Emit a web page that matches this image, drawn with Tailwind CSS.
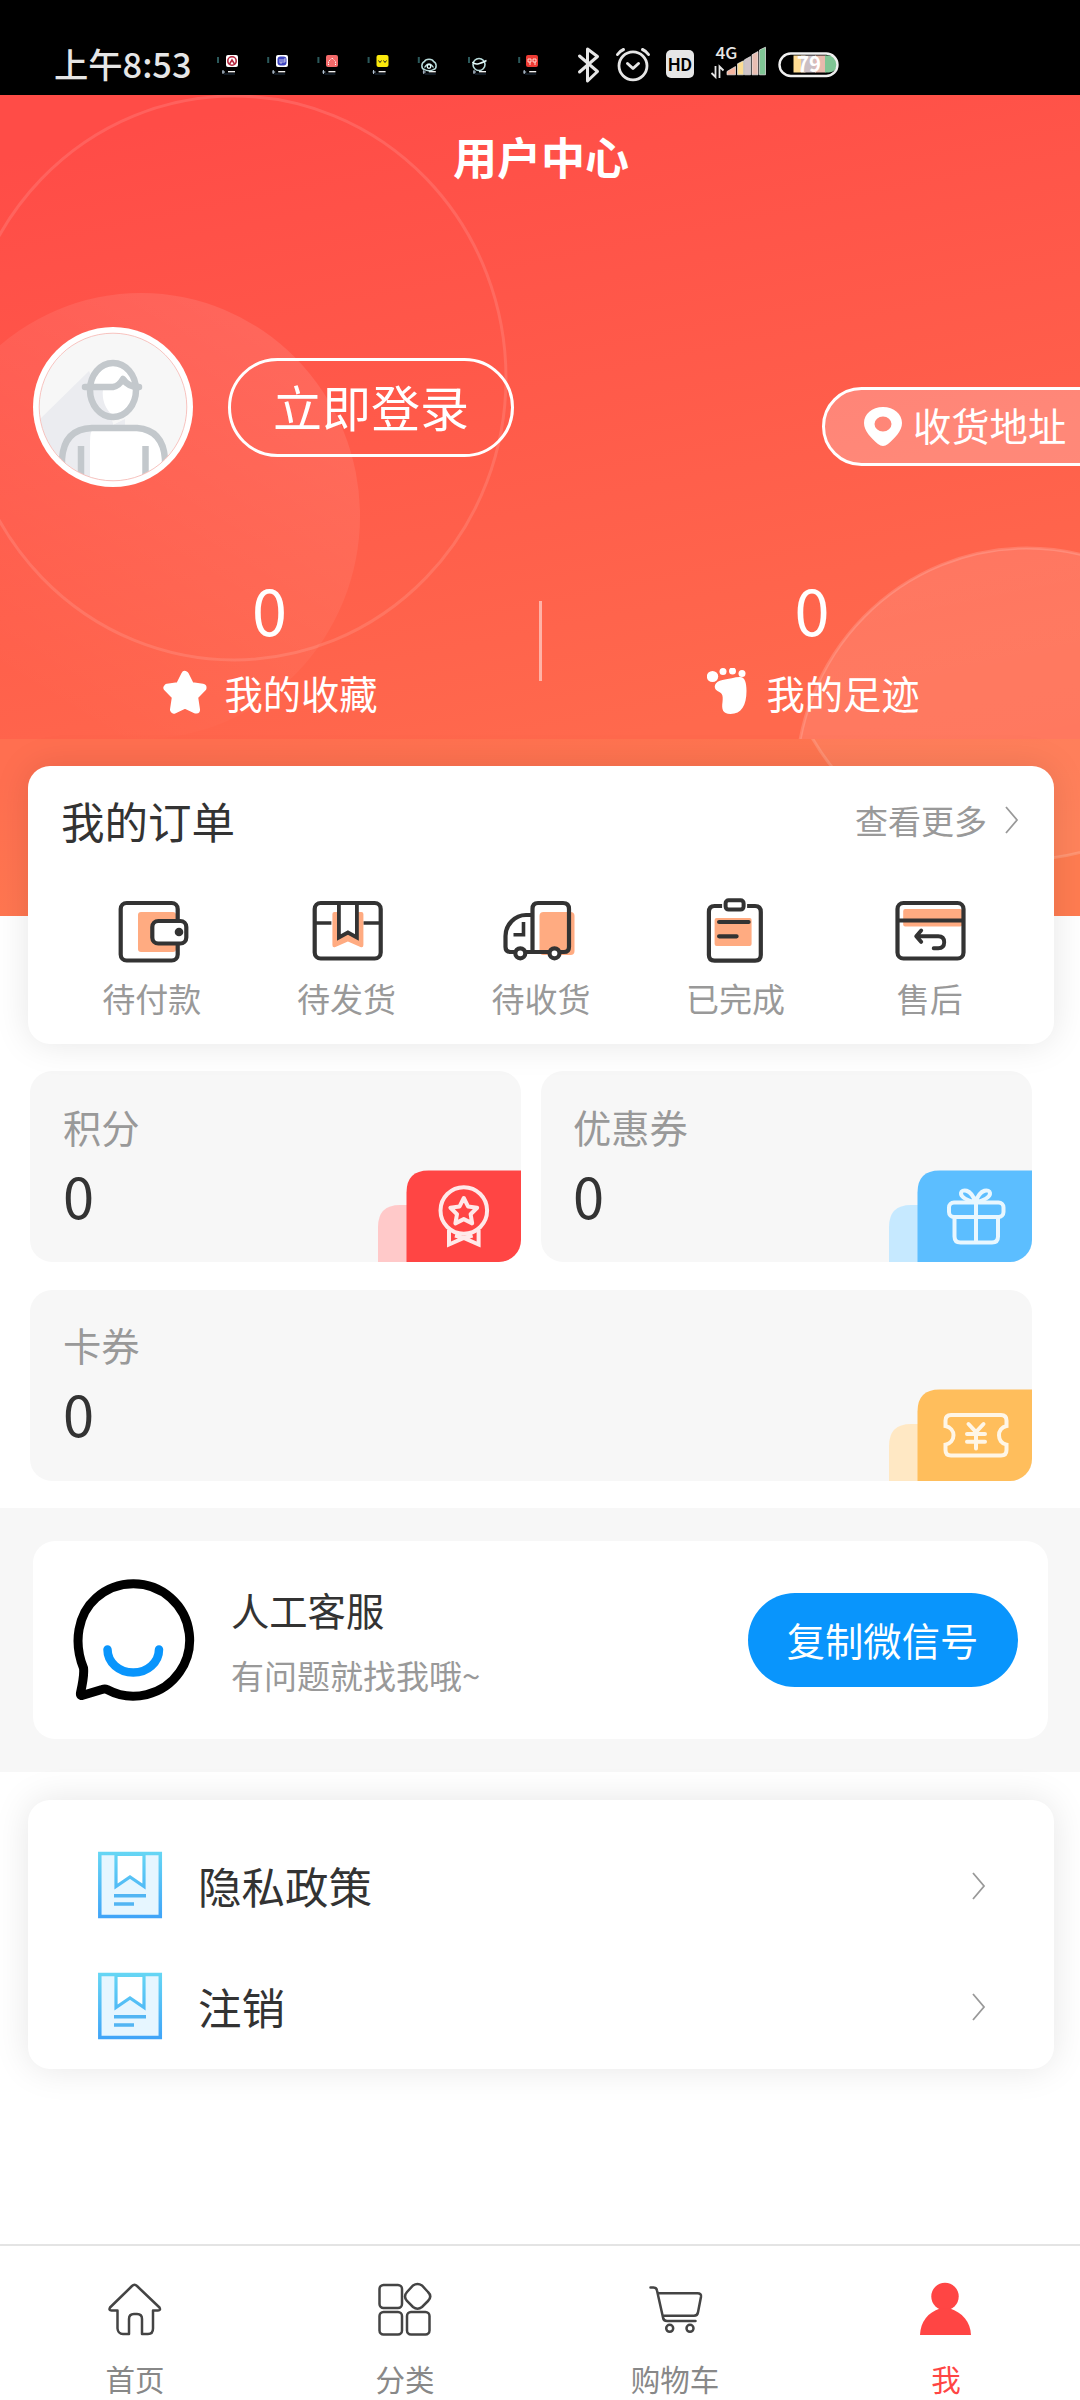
<!DOCTYPE html>
<html lang="zh-CN">
<head>
<meta charset="utf-8">
<title>用户中心</title>
<script src="https://cdn.jsdelivr.net/npm/@tailwindcss/browser@4"></script>
</head>
<body class="bg-white">
<div class="relative w-[1080px] h-[2400px] overflow-hidden flex flex-col bg-white text-[#333] leading-none font-['Noto_Sans_CJK_SC',sans-serif]">

  <!-- status bar -->
  <div class="h-[95px] shrink-0 bg-black flex">
    <div class="w-[217px] pl-[54px] pt-[46px] text-[34.3px] font-medium text-[#e6e6e6] whitespace-nowrap">上午8:53</div>
    <svg class="shrink-0" width="863" height="95" viewBox="217 0 863 95" fill="none">
      <defs>
        <g id="note"><rect x="217" y="57" width="2" height="6" fill="#2b5a5c"/><path d="M223 70v4M222 72h3" stroke="#bcd" stroke-width="1"/><path d="M228 71.7h7" stroke="#fff" stroke-width="1.3"/><path d="M224 74h11" stroke="#234" stroke-width="1"/></g>
      </defs>
      <use href="#note"/><use href="#note" x="50.2"/><use href="#note" x="100.4"/><use href="#note" x="150.6"/><use href="#note" x="200.8"/><use href="#note" x="251"/><use href="#note" x="301.2"/>
      <rect x="226" y="55" width="12" height="12" rx="2" fill="#fff"/><circle cx="232" cy="61" r="4.2" stroke="#b3243c" stroke-width="1.6"/><path d="M229.500 64l2.500-4 2.500 4" stroke="#b3243c" stroke-width="1.500"/>
      <rect x="276" y="55" width="12" height="12" rx="2" fill="#fff"/><rect x="277.500" y="56.500" width="9" height="9" rx="3" fill="#3d44c0"/><path d="M280 59v4h2v-4M284 63v-4h2M284 61h2" stroke="#dde" stroke-width=".8"/>
      <rect x="326" y="55" width="12" height="12" rx="2" fill="#f46a6a"/><path d="M328.500 65v-4M335.500 65v-4M329 61l3-3 3 3" stroke="#fff" stroke-width="1" stroke-dasharray="1.200 1"/>
      <rect x="376.500" y="55" width="12" height="12" rx="2" fill="#fbe90c"/><path d="M378.500 60.500l1.500 2 1.500-2M383.500 60.500l1.500 2 1.500-2" stroke="#222" stroke-width="1"/>
      <path d="M424.500 69.500c-4-1-3-7 0-8 1-3 8-3 9 0 3 1 4 7 0 8-2 1.500-7 1.500-9 0z" stroke="#b9dcdc" stroke-width="1.500"/><path d="M424.500 67.500q4.500-7 9 0" stroke="#b9dcdc" stroke-width="1.300"/><circle cx="429" cy="66.500" r="1.800" stroke="#e8ffff" stroke-width="1.300"/>
      <circle cx="479" cy="64.500" r="6" stroke="#b9dcdc" stroke-width="1.600"/><path d="M472.500 62c3 4 9 1 14-1.500" stroke="#e8ffff" stroke-width="1.500"/>
      <rect x="526" y="55" width="12" height="12" rx="2" fill="#ee3b34"/><path d="M528 59h3v3h-3zM533 59h3v3h-3zM530 62v3M535 62v3" stroke="#ffd9d0" stroke-width="1"/>
      <g stroke="#e6e6e6" stroke-width="3" stroke-linecap="round" stroke-linejoin="round">
        <path d="M579.500 56l18 15.500-10 9.500V49l10 7.500-18 15.500"/>
        <circle cx="633" cy="65.800" r="14" stroke-width="2.800"/><path d="M627.500 63.500l5.500 5 5.500-5M617.500 54.500q2.500-3.500 6-5M648.500 54.500q-2.500-3.500-6-5"/>
      </g>
      <rect x="666" y="50" width="28" height="28" rx="5" fill="#e6e6e6"/>
      <text x="680" y="71" text-anchor="middle" font-family="Roboto" font-weight="600" font-size="18" textLength="24" lengthAdjust="spacingAndGlyphs" fill="#000">HD</text>
      <text x="715.500" y="59" font-family="Noto Sans CJK SC" font-weight="500" font-size="16" textLength="22" lengthAdjust="spacingAndGlyphs" fill="#e6e6e6">4G</text>
      <path d="M715.500 66v11l-4-4M719.500 78V66.500l4 4" stroke="#e6e6e6" stroke-width="1.800"/>
      <g stroke="#eee" stroke-width=".7"><path d="M727 74.800v-3.300l8.500-5v8.300z" fill="#f4b5a0"/><path d="M737.500 74.800v-11l6-3v14z" fill="#fbdc93"/><path d="M744.500 74.800v-15l6-3.300v18.300z" fill="#cfc3c6"/><path d="M752 74.800v-20l6-3.300v23.300z" fill="#e8beb2"/><path d="M759.500 74.800V50l6-2.800v27.600z" fill="#7fc594"/></g>
      <path d="M793.500 55.500h12v17h-12z" fill="#ffdc92"/><path d="M801 55.500h15v17h-15z" fill="#cbbfc4"/><path d="M815 55.500h10.500v17H815z" fill="#e8b9ad"/><path d="M825 55.500h4a8.500 8.500 0 010 17h-4z" fill="#7fc594"/>
      <rect x="779.500" y="53.500" width="58" height="22.500" rx="11.250" stroke="#f0f0f0" stroke-width="2.400"/>
      <text x="797" y="72" font-family="Noto Sans CJK SC" font-weight="700" font-size="21.500" textLength="24" lengthAdjust="spacingAndGlyphs" fill="#fff">79</text>
    </svg>
  </div>

  <!-- header -->
  <div class="relative h-[821px] shrink-0 overflow-hidden text-white flex flex-col">
    <svg class="absolute left-0 top-0" width="1080" height="821" viewBox="0 95 1080 821" fill="none">
      <defs>
        <linearGradient id="hd" gradientUnits="userSpaceOnUse" x1="470" y1="60" x2="610" y2="740"><stop offset="0" stop-color="#ff4c47"/><stop offset="1" stop-color="#ff694d"/></linearGradient>
        <linearGradient id="hd2" gradientUnits="userSpaceOnUse" x1="470" y1="700" x2="510" y2="930"><stop offset="0" stop-color="#ff6f50"/><stop offset="1" stop-color="#ff7c51"/></linearGradient>
        <linearGradient id="c1" x1=".8" y1="0" x2=".25" y2=".9"><stop offset="0" stop-color="#fff" stop-opacity=".11"/><stop offset="1" stop-color="#fff" stop-opacity="0"/></linearGradient>
        <linearGradient id="c2" x1=".3" y1="0" x2=".5" y2="1"><stop offset="0" stop-color="#fff" stop-opacity=".12"/><stop offset="1" stop-color="#fff" stop-opacity=".08"/></linearGradient>
        <clipPath id="up"><rect y="95" width="1080" height="644"/></clipPath>
        <clipPath id="dn"><rect y="739" width="1080" height="177"/></clipPath>
      </defs>
      <rect y="95" width="1080" height="644" fill="url(#hd)"/>
      <rect y="739" width="1080" height="177" fill="url(#hd2)"/>
      <g clip-path="url(#up)">
        <ellipse cx="141" cy="516" rx="219" ry="223" fill="url(#c1)"/>
        <ellipse cx="234" cy="378" rx="272" ry="282" stroke="#fff" stroke-opacity=".12" stroke-width="3"/>
        <ellipse cx="1027" cy="784" rx="231" ry="236" fill="url(#c2)" stroke="#fff" stroke-opacity=".16" stroke-width="3"/>
      </g>
      <g clip-path="url(#dn)"><ellipse cx="1021" cy="610" rx="243" ry="250" fill="#fff" fill-opacity=".06" stroke="#fff" stroke-opacity=".16" stroke-width="3"/></g>
    </svg>

    <h1 class="relative h-[121px] shrink-0 flex items-center justify-center pl-[2px] text-[44px] font-bold">用户中心</h1>

    <div class="relative mt-[111px] h-[160px] shrink-0 flex items-center pl-[33px]">
      <svg class="shrink-0" width="160" height="160" viewBox="0 0 160 160" fill="none">
        <defs><clipPath id="av"><circle cx="80" cy="80" r="73.500"/></clipPath></defs>
        <circle cx="80" cy="80" r="80" fill="#fff"/>
        <g clip-path="url(#av)">
          <rect width="160" height="160" fill="#f7f7f7"/>
          <path d="M56 44L5 94v66h75V96z" fill="#ebecf0"/>
          <path d="M80 98l12-6v8H80z" fill="#ebecf0"/>
          <ellipse cx="80" cy="63" rx="23" ry="27" fill="#fff"/><path d="M58 62h12q-2 16 10 27-20-4-22-27z" fill="#ebecf0"/>
          <path d="M29 160v-28q2-30 30-31h45q26 2 28 31v28z" fill="#fff"/><path d="M29 160v-28q2-30 30-31h1q-3 4-3 14v45z" fill="#ebecf0"/>
          <g stroke="#c3c8cc" stroke-width="6.500">
            <ellipse cx="80" cy="63" rx="23" ry="27"/>
            <path d="M52 60h28q6-1 10-8 5 8 16 8" stroke-linecap="round" stroke-linejoin="round"/>
            <path d="M29 160v-28q2-30 30-31h45q26 2 28 31v28M48 119v41M112.500 119v41"/>
          </g>
        </g>
        <circle cx="80" cy="80" r="73.800" stroke="#f3a9a3" stroke-width=".7"/>
      </svg>
      <button class="ml-[35px] w-[286px] h-[99px] rounded-full border-3 border-white flex items-center justify-center pb-[4px] text-[49px]">立即登录</button>
      <div class="absolute left-[822px] top-[60px] w-[300px] h-[79px] rounded-full border-3 border-white bg-white/25 flex items-center pl-[39px]">
        <svg width="38" height="39" viewBox="0 0 38 39"><path fill="#fff" fill-rule="evenodd" d="M19 0C30 0 38 7 38 16c0 8-7 15-14 21q-5 4-10 0C7 31 0 24 0 16 0 7 8 0 19 0zm0 9.500a8.500 7.500 0 100 15 8.500 7.500 0 000-15z"/></svg>
        <span class="ml-[11px] -mt-[2px] text-[38.300px] whitespace-nowrap">收货地址</span>
      </div>
    </div>

    <div class="relative h-[252px] shrink-0 flex">
      <div class="w-[539px] flex flex-col items-center">
        <div class="mt-[90px] h-[64px] text-[63px]">0</div>
        <div class="mt-[32px] h-[40px] flex items-center pl-[1px]">
          <svg width="46" height="46" viewBox="0 0 46 46"><path fill="#fff" stroke="#fff" stroke-width="8" stroke-linejoin="round" d="M23 5l5.500 11 12 1.800-8.500 8.600 2 13.200-11-5.300-11 5.300 2-13.200-8.500-8.600 12-1.800z"/></svg>
          <span class="ml-[16px] mt-[1px] text-[38.300px]">我的收藏</span>
        </div>
      </div>
      <div class="mt-[114px] w-[3px] h-[80px] bg-white/50"></div>
      <div class="w-[538px] flex flex-col items-center pl-[2px]">
        <div class="mt-[90px] h-[64px] text-[63px]">0</div>
        <div class="mt-[32px] h-[40px] flex items-center pl-[3px]">
          <svg class="-mt-[4px]" width="42" height="46" viewBox="707 670 42 46" fill="#fff"><ellipse cx="712.500" cy="678.500" rx="5.700" ry="5.500"/><circle cx="723" cy="673.500" r="3.500"/><circle cx="732.500" cy="673" r="3.500"/><circle cx="742" cy="675.500" r="3.500"/><path d="M740 679c5 0 6.500 6 6.500 14 0 14-5 23-16 23-8 0-9-5-8-12 1-8-1-9-5-11-5-3-3-10 5-11 7-1 12-3 17.500-3z"/></svg>
          <span class="ml-[17px] mt-[1px] text-[38.300px]">我的足迹</span>
        </div>
      </div>
    </div>
  </div>

  <!-- orders -->
  <section class="relative -mt-[150px] mx-[28px] w-[1026px] h-[278px] shrink-0 rounded-[22px] bg-white shadow-[0_0_36px_rgba(0,0,0,0.1)]">
    <div class="h-[110px] flex items-center pl-[33px] pr-[35px]">
      <h2 class="text-[43.500px]">我的订单</h2>
      <span class="ml-auto text-[33px] text-[#999] -mt-[2px]">查看更多</span>
      <svg class="ml-[17px] -mt-[2px]" width="15" height="28" viewBox="0 0 15 28" fill="none" stroke="#999" stroke-width="1.800"><path d="M2 1l11 13L2 27"/></svg>
    </div>
    <div class="px-[27px] grid grid-cols-5 text-[33px] text-[#999]">
      <div class="flex flex-col items-center pt-[22px] pr-[1px]">
        <svg width="74" height="68" viewBox="115 898 74 68" fill="none" stroke="#333" stroke-width="4.200"><rect x="138" y="912" width="38" height="40" rx="3" fill="#ffab81" stroke="none"/><rect x="120.700" y="903" width="57" height="57.500" rx="6"/><rect x="152.300" y="921" width="34" height="22.500" rx="6" fill="#fff"/><circle cx="179" cy="932" r="4.300" fill="#333" stroke="none"/></svg>
        <span class="mt-[16px]">待付款</span>
      </div>
      <div class="flex flex-col items-center pt-[22px]">
        <svg width="74" height="68" viewBox="309.600 898 74 68" fill="none" stroke="#333" stroke-width="4.200"><rect x="314.300" y="903" width="66" height="55.500" rx="6"/><path d="M314 923h17M363 923h17" stroke-width="3.500"/><path d="M334 912h27q2 0 2 2v31q0 3-3 2l-12.500-5.500-12.500 5.500q-3 1-3-2v-31q0-2 2-2z" fill="#ffab81" stroke="none"/><path d="M338.500 903v34.500l9-5 9 5V903z" fill="#fff" stroke-width="3.800"/></svg>
        <span class="mt-[16px]">待发货</span>
      </div>
      <div class="flex flex-col items-center pt-[22px]">
        <svg width="74" height="68" viewBox="504 898 74 68" class="overflow-visible" fill="none" stroke="#333" stroke-width="4.200"><rect x="539.500" y="912" width="35" height="43" rx="4" fill="#ffab81" stroke="none"/><path d="M532.500 915H526c-11 0-20.500 9.500-20.500 21v11q0 5 5 5h53.500q5 0 5-5V909q0-6-6-6h-25q-5.500 0-5.500 6v43"/><path d="M523.500 922v12.700h-10" stroke-width="3.600"/><circle cx="520.300" cy="953.300" r="5" fill="#fff"/><circle cx="554.500" cy="953.300" r="5" fill="#fff"/></svg>
        <span class="mt-[16px]">待收货</span>
      </div>
      <div class="flex flex-col items-center pt-[22px]">
        <svg width="74" height="68" viewBox="698.400 898 74 68" class="overflow-visible" fill="none" stroke="#333" stroke-width="4.200"><rect x="715" y="918" width="37" height="28" rx="2" fill="#ffab81" stroke="none"/><path d="M722.500 906H715q-5.700 0-5.700 6v43q0 5.600 5.700 5.600h40.500q5.700 0 5.700-5.600v-43q0-6-5.700-6H747.500"/><rect x="726" y="900.300" width="18" height="9.300" rx="3" stroke-width="4"/><path d="M719.500 922h29.500M719.500 936.300h17.500" stroke-linecap="round"/></svg>
        <span class="mt-[16px]">已完成</span>
      </div>
      <div class="flex flex-col items-center pt-[22px]">
        <svg width="74" height="68" viewBox="892.800 898 74 68" fill="none" stroke="#333" stroke-width="4.200"><rect x="903" y="909" width="59" height="17.500" rx="2" fill="#ffab81" stroke="none"/><rect x="897.300" y="903" width="66" height="55.500" rx="6"/><path d="M897 920.500h66"/><path d="M921 930.500l-5 5.700 5 5.700M916.500 936.200H938q6 0 6 6t-6 6h-4.500" stroke-linecap="round" stroke-linejoin="round" stroke-width="3.900"/></svg>
        <span class="mt-[16px]">售后</span>
      </div>
    </div>
  </section>

  <!-- assets -->
  <section class="mt-[27px] ml-[30px] w-[1002px] shrink-0 grid grid-cols-2 gap-x-[20px] gap-y-[28px]">
    <div class="h-[191px] rounded-[22px] bg-[#f7f7f7] overflow-hidden flex justify-between pl-[33px]">
      <div class="pt-[37px]"><div class="text-[38.300px] text-[#999]">积分</div><div class="mt-[21px] text-[56px]">0</div></div>
      <svg class="self-end" width="143" height="93" viewBox="378 1169 143 93" fill="none" stroke="#ffe9e9" stroke-width="4"><path d="M378 1262v-35q0-22 22-22h8v57z" fill="#ffc9c9" stroke="none"/><path d="M406.500 1262v-69.500q0-22 22-22H521v91.500z" fill="#ff4544" stroke="none"/><circle cx="463.800" cy="1210.500" r="23.300"/><path d="M463.800 1198l4.200 8.400 9.200 1.300-6.600 6.500 1.600 9.200-8.400-4.300-8.400 4.300 1.600-9.200-6.600-6.500 9.200-1.300z" stroke-linejoin="round"/><path d="M449 1230v14.500l14.800-6.500 14.800 6.500V1230M455 1235.500l8.800 2.500 8.800-2.500"/></svg>
    </div>
    <div class="h-[191px] rounded-[22px] bg-[#f7f7f7] overflow-hidden flex justify-between pl-[32px]">
      <div class="pt-[37px]"><div class="text-[38.300px] text-[#999]">优惠券</div><div class="mt-[21px] text-[56px]">0</div></div>
      <svg class="self-end" width="143" height="93" viewBox="889 1169 143 93" fill="none" stroke="#e8f7ff" stroke-width="4"><path d="M889 1262v-35q0-22 22-22h8v57z" fill="#c6e9ff" stroke="none"/><path d="M917.500 1262v-69.500q0-22 22-22h92.500v91.500z" fill="#5cbeff" stroke="none"/><rect x="949" y="1202.500" width="54.500" height="14.500" rx="5"/><path d="M954.500 1217.500v19q0 6 6 6h31.500q6 0 6-6v-19M976 1202.500v40M975.500 1202c-8-1-15-5-14.500-9s9.500-5 14.500 9c5-14 14-13 14.500-9s-6.500 8-14.500 9z"/></svg>
    </div>
    <div class="col-span-2 h-[191px] rounded-[22px] bg-[#f7f7f7] overflow-hidden flex justify-between pl-[33px]">
      <div class="pt-[36px]"><div class="text-[38.300px] text-[#999]">卡券</div><div class="mt-[21px] text-[56px]">0</div></div>
      <svg class="self-end" width="143" height="93" viewBox="889 1388 143 93" fill="none" stroke="#fff6e6" stroke-width="4"><path d="M889 1481v-35q0-22 22-22h8v57z" fill="#ffe8c4" stroke="none"/><path d="M917.500 1481v-69.500q0-22 22-22h92.500v91.500z" fill="#ffbe5c" stroke="none"/><path d="M945.500 1426v-5.500q0-5.500 5.500-5.500h50q5.500 0 5.500 5.500v5.500c-5 1-7.500 5-7.500 9.300s2.500 8.300 7.500 9.300v5.500q0 5.500-5.500 5.500h-50q-5.500 0-5.500-5.500v-5.500c5-1 8-5 8-9.300s-3-8.300-8-9.300z"/><path d="M968.500 1424l7.500 8 7.500-8M976 1432v16.500M967 1434h18M967 1441.700h18" stroke-linecap="round"/></svg>
    </div>
  </section>

  <!-- support -->
  <section class="mt-[27px] h-[264px] shrink-0 bg-[#f7f7f7] px-[33px] py-[33px]">
    <div class="w-[1015px] h-[198px] rounded-[22px] bg-white flex items-center pl-[40px] pr-[30px]">
      <svg width="122" height="124" viewBox="73 1578 122 124" fill="none" stroke-linejoin="round" stroke-linecap="round"><path d="M83.500 1668C73 1642 78 1614 96 1598A56.200 56.200 0 11107 1689.500Q105 1688.500 102 1689.500L82 1695.500Q80 1695.500 80.500 1693Q84.500 1675 83.500 1668z" stroke="#000" stroke-width="9"/><path d="M107.500 1649.500a25.700 23 0 0051.500 0" stroke="#0995fc" stroke-width="8.500"/></svg>
      <div class="ml-[36px] mt-[3px] flex flex-col"><span class="text-[38.300px]">人工客服</span><span class="mt-[30px] text-[33px] text-[#999]">有问题就找我哦~</span></div>
      <button class="ml-auto w-[270px] h-[94px] rounded-full bg-[#0995fc] text-white text-[38.300px] flex items-center justify-center pr-[1px]">复制微信号</button>
    </div>
  </section>

  <!-- links -->
  <section class="mt-[28px] mx-[28px] w-[1026px] h-[269px] shrink-0 rounded-[22px] bg-white shadow-[0_0_36px_rgba(0,0,0,0.1)] pt-[24px] pl-[69px] pr-[68px]">
    <div class="h-[121px] flex items-center">
      <svg width="66" height="68" viewBox="97 1850 66 68" fill="none"><defs><linearGradient id="dg" x1="0" y1="1851" x2="0" y2="1918" gradientUnits="userSpaceOnUse"><stop stop-color="#66d6f4"/><stop offset="1" stop-color="#3fa3f8"/></linearGradient></defs><g id="doc"><rect x="99.800" y="1852.500" width="60.500" height="63" fill="#e6f6ff" stroke="url(#dg)" stroke-width="3.500"/><path d="M116 1853.500v32l14-9.500 14 9.500v-32z" fill="#fff" stroke="url(#dg)" stroke-width="3.200"/><path d="M114 1894.800h32M114 1903h20" stroke="#52b5f3" stroke-width="3.400"/></g></svg>
      <span class="ml-[35px] mt-[2px] text-[43.500px]">隐私政策</span>
      <svg class="ml-auto mt-[2px]" width="15" height="28" viewBox="0 0 15 28" fill="none" stroke="#999" stroke-width="1.800"><path d="M2 1l11 13L2 27"/></svg>
    </div>
    <div class="h-[121px] flex items-center">
      <svg width="66" height="68" viewBox="97 1850 66 68" fill="none"><use href="#doc"/></svg>
      <span class="ml-[35px] mt-[2px] text-[43.500px]">注销</span>
      <svg class="ml-auto mt-[2px]" width="15" height="28" viewBox="0 0 15 28" fill="none" stroke="#999" stroke-width="1.800"><path d="M2 1l11 13L2 27"/></svg>
    </div>
  </section>

  <!-- tab bar -->
  <nav class="mt-auto h-[156px] shrink-0 border-t-2 border-[#e4e4e4] bg-white grid grid-cols-4 text-[29.500px] text-[#888]">
    <div class="flex flex-col items-center pt-[34px]">
      <svg width="60" height="58" viewBox="105 2280 60 58" fill="none" stroke="#444" stroke-width="2.500" stroke-linejoin="round"><path d="M132 2286q2.500-2.500 5 0l22.500 21.500q1.500 3-1.500 3H153v18q0 5.500-5 5.500h-6v-15q0-5-5-5h-3q-5 0-5 5v15h-6q-5 0-5.500-5.500v-18h-6q-3 0-1.500-3z"/></svg>
      <span class="mt-[26px]">首页</span>
    </div>
    <div class="flex flex-col items-center pt-[34px]">
      <svg width="60" height="58" viewBox="375 2280 60 58" fill="none" stroke="#444" stroke-width="2.500"><rect x="379.500" y="2285" width="22.500" height="23" rx="4"/><rect x="379.500" y="2312" width="22.500" height="22.500" rx="4"/><rect x="407" y="2312" width="22.500" height="22.500" rx="4"/><path d="M413 2285.500q4.500-3 9 0l6 6.500q4.500 4.500 0 9l-6 6q-4.500 3.500-9 0l-6-6q-4-4.500 0-9z"/></svg>
      <span class="mt-[26px]">分类</span>
    </div>
    <div class="flex flex-col items-center pt-[34px]">
      <svg width="60" height="58" viewBox="645 2280 60 58" fill="none" stroke="#444" stroke-width="2.500" stroke-linecap="round" stroke-linejoin="round"><path d="M650.500 2287.500h3q3 0 3.500 3l6 27q.5 3.500 4 3.500h28.500M658.500 2293.300h39q4 0 3.500 3.500l-3 15.500q-.5 3.500-4 3.500h-31"/><circle cx="669.700" cy="2328.300" r="3.500"/><circle cx="690" cy="2328.300" r="3.500"/></svg>
      <span class="mt-[26px]">购物车</span>
    </div>
    <div class="flex flex-col items-center pt-[34px] pl-[2px] text-[#ff4544]">
      <svg width="60" height="58" viewBox="916 2280 60 58" fill="#ff4544"><circle cx="945" cy="2296.500" r="13.700"/><path d="M940 2308.500h10c12 4 20.500 13 21 26.500h-51c.500-13.500 8-22.500 20-26.500z"/></svg>
      <span class="mt-[26px]">我</span>
    </div>
  </nav>
</div>
</body>
</html>
